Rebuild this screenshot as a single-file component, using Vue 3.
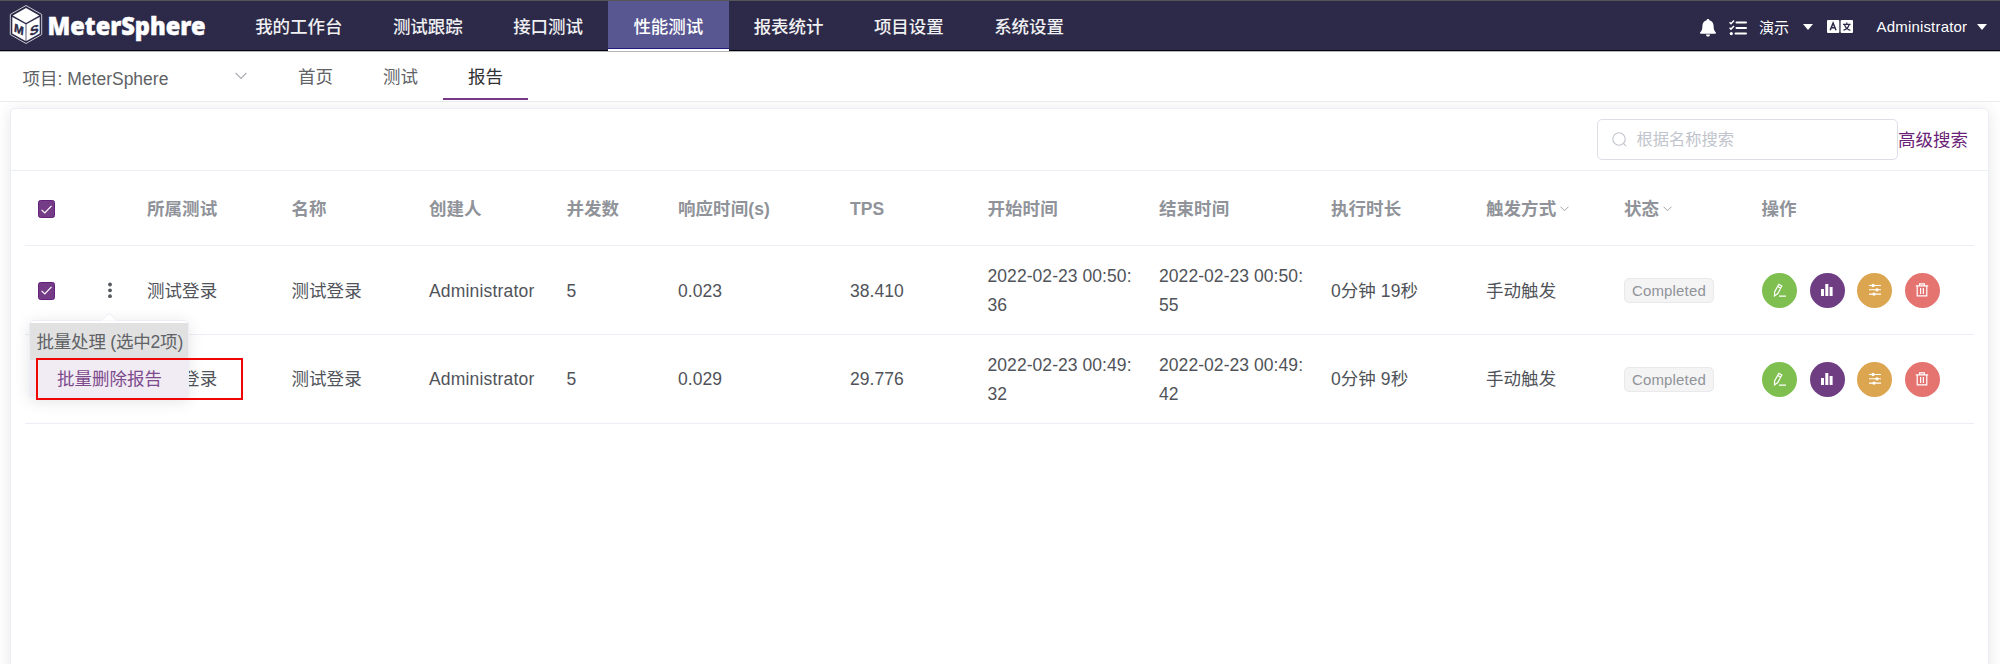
<script setup>
const menus = ['我的工作台', '测试跟踪', '接口测试', '性能测试', '报表统计', '项目设置', '系统设置']
const activeMenu = '性能测试'
const tabs = ['首页', '测试', '报告']
const activeTab = '报告'
const columns = [
  { label: '所属测试' }, { label: '名称' }, { label: '创建人' }, { label: '并发数' },
  { label: '响应时间(s)' }, { label: 'TPS' }, { label: '开始时间' }, { label: '结束时间' },
  { label: '执行时长' }, { label: '触发方式', filter: true }, { label: '状态', filter: true }, { label: '操作' },
]
const rows = [
  { test: '测试登录', name: '测试登录', user: 'Administrator', threads: '5', resp: '0.023', tps: '38.410', start: '2022-02-23 00:50:36', end: '2022-02-23 00:50:55', duration: '0分钟 19秒', trigger: '手动触发', status: 'Completed' },
  { test: '测试登录', name: '测试登录', user: 'Administrator', threads: '5', resp: '0.029', tps: '29.776', start: '2022-02-23 00:49:32', end: '2022-02-23 00:49:42', duration: '0分钟 9秒', trigger: '手动触发', status: 'Completed' },
]
const fields = ['test', 'name', 'user', 'threads', 'resp', 'tps', 'start', 'end', 'duration', 'trigger']
</script>

<template>
  <div class="page">
    <header class="topbar">
      <svg class="logo" width="206" height="46" viewBox="0 0 206 46">
        <path d="M22 1.500 37.700 10.400V30.600L22 39.500 6.300 30.600V10.400Z" fill="none" stroke="#c9c9d4" stroke-width="1" />
        <path d="M22 4 35.200 11.600 22 19 8.800 11.600Z" fill="#fff" />
        <path d="M8.300 12.900 21.600 20.200V37L8.300 29.500Z" fill="#fff" />
        <path d="M35.700 12.900 22.400 20.200V37L35.700 29.500Z" fill="#fff" />
        <text class="face" transform="matrix(1 .45 -.1 1 9.800 27.200)">M</text>
        <text class="face" transform="matrix(1.150 -.5 -.1 1.100 25.400 32.300)">S</text>
        <text x="43.500" y="31" class="brand" textLength="158" lengthAdjust="spacingAndGlyphs">MeterSphere</text>
      </svg>
      <nav class="menu">
        <a v-for="m in menus" :key="m" class="menu-item" :class="{ active: m === activeMenu }">{{ m }}</a>
      </nav>
      <div class="tools">
        <svg class="bell" width="16" height="18" viewBox="0 0 16 18"><path d="M8 0c.8 0 1.300.5 1.300 1.200C12 1.900 13.600 4 13.600 7c0 3.500.8 5 2.100 6.200.6.7.2 1.500-.7 1.500H1c-.9 0-1.300-.8-.7-1.500C1.600 12 2.400 10.500 2.400 7c0-3 1.600-5.100 4.300-5.800C6.700.5 7.200 0 8 0ZM5.900 15.600h4.200a2.100 2.100 0 0 1-4.200 0Z" fill="#fff" /></svg>
        <svg class="tasks" width="18" height="16" viewBox="0 0 18 16" fill="none" stroke="#fff"><path d="M.6 2.300 2 3.700 5 .6M.6 7.700 2 9.100 5 6" stroke-width="1.500" /><circle cx="2.300" cy="13.600" r="1.600" fill="#fff" stroke="none" /><path d="M7.500 2.500H17M7.500 8H17M6.500 13.600H17" stroke-width="2" stroke-linecap="round" /></svg>
        <span class="org">演示</span>
        <i class="caret caret-org"></i>
        <svg class="lang" width="26" height="13" viewBox="0 0 26 13"><rect width="12.300" height="13" rx="1" fill="#fff" /><rect x="13.600" width="12.400" height="13" rx="1" fill="#fff" /><path d="M3.200 10.300 6.100 3 9 10.300M4.300 7.800H8" fill="none" stroke="#2c2a48" stroke-width="1.500" /><path d="M16 4.300H23.600M19.800 2.500V4.300M22.200 4.500C21.600 7 19.500 9.300 16.400 10.300M17.500 4.500C18.300 7.400 20.300 9.500 23.400 10.300" fill="none" stroke="#2c2a48" stroke-width="1.200" /></svg>
        <span class="user">Administrator</span>
        <i class="caret"></i>
      </div>
    </header>

    <div class="subbar">
      <div class="project">
        <span>项目: MeterSphere</span>
        <svg width="12" height="8" viewBox="0 0 12 8"><path d="M.7 1 6 6.500 11.300 1" fill="none" stroke="#a9acb3" stroke-width="1.100" /></svg>
      </div>
      <a v-for="t in tabs" :key="t" class="tab" :class="{ active: t === activeTab }">{{ t }}</a>
    </div>

    <main class="content">
      <section class="card">
        <div class="card-head">
          <div class="search">
            <svg width="15" height="15" viewBox="0 0 15 15" fill="none" stroke="#c0c4cc" stroke-width="1.100"><circle cx="7" cy="7" r="6.200" /><path d="M11.400 11.400 14.200 14.200" /></svg>
            <span>根据名称搜索</span>
          </div>
          <a class="advanced">高级搜索</a>
        </div>
        <div class="table">
          <div class="row head">
            <div class="cell check"><span class="box"><svg width="17" height="17" viewBox="0 0 17 17"><path d="M3.600 8.800 6.800 12 13.500 4.800" fill="none" stroke="#fff" stroke-width="1.200" /></svg></span></div>
            <div class="cell"></div>
            <div v-for="c in columns" :key="c.label" class="cell">
              {{ c.label }}<svg v-if="c.filter" class="arrow" width="9" height="6" viewBox="0 0 9 6"><path d="M.5.700 4.500 4.700 8.500.700" fill="none" stroke="#a0a3a9" stroke-width="1" /></svg>
            </div>
          </div>
          <div v-for="(r, i) in rows" :key="i" class="row">
            <div class="cell check"><span class="box"><svg width="17" height="17" viewBox="0 0 17 17"><path d="M3.600 8.800 6.800 12 13.500 4.800" fill="none" stroke="#fff" stroke-width="1.200" /></svg></span></div>
            <div class="cell more"><svg width="4" height="17" viewBox="0 0 4 17" fill="#55585e"><circle cx="2" cy="2.500" r="1.900" /><circle cx="2" cy="8.300" r="1.900" /><circle cx="2" cy="14.200" r="1.900" /></svg></div>
            <div v-for="f in fields" :key="f" class="cell" :class="f"><span>{{ r[f] }}</span></div>
            <div class="cell status"><span class="tag">{{ r.status }}</span></div>
            <div class="cell actions">
              <button class="btn green"><svg width="14" height="14" viewBox="0 0 14 14" fill="none" stroke="#fff" stroke-width="1.200"><path d="M5.800 1.300 8.800 3 4.800 10.600 1.500 12.900 1.600 8.900ZM4.700 3.400 7.700 5.100M6 13.200H13" /></svg></button>
              <button class="btn purple"><svg width="14" height="14" viewBox="0 0 14 14" fill="#fff"><rect x="1" y="6" width="3" height="7" /><rect x="5.300" y="1" width="3" height="12" /><rect x="9.600" y="4" width="3" height="9" /></svg></button>
              <button class="btn orange"><svg width="14" height="14" viewBox="0 0 14 14" fill="#fff" stroke="#fff" stroke-width="1.100"><path d="M1 2.500H13M1 6.800H13M1 11.100H13" /><circle cx="5" cy="2.500" r="1.100" /><circle cx="9" cy="6.800" r="1.100" /><circle cx="6" cy="11.100" r="1.100" /></svg></button>
              <button class="btn red"><svg width="14" height="14" viewBox="0 0 14 14" fill="none" stroke="#fff" stroke-width="1.200"><path d="M.8 2.900H13.200M4.600 2.800V.900H9.400V2.800M2.200 3V12.900H11.800V3M5.600 5V11M8.400 5V11" /></svg></button>
            </div>
          </div>
        </div>
      </section>
    </main>

    <div class="dropdown">
      <svg class="tip" width="16" height="8" viewBox="0 0 16 8"><path d="M0 8 7 1Q8 .2 9 1L16 8Z" fill="#fff" stroke="#ebeef5" /></svg>
      <div class="drop-title">批量处理 (选中2项)</div>
      <div class="drop-item">批量删除报告</div>
    </div>
    <div class="highlight"></div>
  </div>
</template>

<style>
body { margin: 0; background: #fff; overflow: hidden; }
</style>

<style scoped>
* { box-sizing: border-box; }
.page { position: relative; width: 2000px; height: 664px; overflow: hidden; font-family: "Liberation Sans", "Noto Sans CJK SC", sans-serif; font-size: 17.5px; color: #606266; }
.topbar { display: flex; height: 52px; background: #2c2a48; border-top: 1px solid #565656; border-bottom: 1px solid #b5b5b8; box-shadow: inset 0 -1px 0 #05050d; }
.logo { flex: none; margin: 2.500px 0 0 4px; overflow: visible; }
.brand { font-family: "Noto Sans", "Open Sans", sans-serif; font-weight: 900; font-size: 25.500px; fill: #fff; stroke: #fff; stroke-width: .5px; }
.face { font-family: "Liberation Sans", sans-serif; font-weight: 700; font-size: 11.500px; fill: #2c2a48; stroke: #2c2a48; stroke-width: .4px; }
.menu { display: flex; margin-left: 20px; }
.menu-item { flex: none; height: 51px; padding: 0 25.130px; line-height: 52px; color: #f0f0f2; font-weight: 500; white-space: nowrap; }
.menu-item.active { height: 50px; background: #595791; border-bottom: 2px solid #fff; color: #fff; box-shadow: inset 0 -1px 0 #1e1c82; }
.tools { display: flex; align-items: center; height: 50px; margin-left: auto; padding-right: 13.500px; color: #fff; font-size: 15px; }
.tools > * { flex: none; }
.bell { margin: 3px 13px 0 0; }
.tasks { margin: 3px 12px 0 0; }
.org { width: 44px; }
.caret { border: 5px solid transparent; border-top: 6px solid #fff; border-bottom: 0; margin-left: 9px; margin-top: 1px; }
.caret-org { margin: 1px 14px 0 0; }
.lang { margin-right: 23.500px; }
.user { letter-spacing: .15px; width: 91px; }
.subbar { position: relative; z-index: 1; display: flex; height: 50px; background: #fff; border-bottom: 1px solid #e9ebef; }
.project { display: flex; align-items: center; justify-content: space-between; width: 247px; padding: 2px 0 0 22.500px; margin-right: 26px; }
.project svg { margin-bottom: 3px; }
.tab { width: 85px; height: 48px; line-height: 50px; text-align: center; }
.tab.active { color: #303133; border-bottom: 2px solid #783887; }
.content { padding: 6px 11px 0 10px; }
.card { height: 600px; background: #fff; border: 1px solid #ebeef5; border-radius: 5px; box-shadow: 0 2.500px 15px rgba(0, 0, 0, .1); }
.card-head { display: flex; align-items: center; justify-content: flex-end; height: 62px; padding: 0 20px 0 0; border-bottom: 1px solid #ebeef5; }
.search { display: flex; align-items: center; gap: 9.500px; width: 301px; height: 41px; margin-bottom: 1px; padding: 0 14px; border: 1px solid #dcdfe6; border-radius: 5px; color: #c0c4cc; font-size: 16.250px; line-height: 24px; }
.search span { margin-top: -1px; }
.advanced { color: #6a1f78; line-height: 28px; }
.table { margin: 0 14px; }
.row { display: grid; grid-template-columns: 59.500px 50px 144.500px 137.500px 137.500px 111.500px 172px 137.500px 171.500px 172px 155px 138px 137.500px 223.500px; height: 88.750px; border-bottom: 1px solid #ebeef5; align-items: center; color: #505359; line-height: 28.750px; }
.head { height: 75px; color: #909399; font-weight: 700; }
.cell { padding: 2px 12.500px 0; word-break: break-all; letter-spacing: .06px; }
.head .cell { white-space: nowrap; }
.user { letter-spacing: .18px; }
.row .user { width: auto; }
.check { line-height: 0; }
.box { display: inline-block; width: 17.500px; height: 17.500px; background: #743b86; border: 1px solid #65207a; border-radius: 2.500px; }
.box svg { margin: -.75px; }
.more { display: flex; justify-content: flex-end; padding-right: 23px; }
.arrow { margin-left: 4px; vertical-align: 3px; }
.status { padding-top: 0; }
.tag { display: inline-block; height: 25px; padding: 0 7px; line-height: 24.500px; border: 1px solid #e9e9eb; border-radius: 5px; background: #f4f4f5; color: #909399; font-size: 15px; letter-spacing: .15px; vertical-align: middle; }
.actions { display: flex; gap: 12.600px; padding-top: 1px; padding-left: 13px; }
.btn { display: flex; align-items: center; justify-content: center; flex: none; width: 35px; height: 35px; padding: 0; border: 0; border-radius: 50%; }
.green { background: #7fbf50; }
.purple { background: #6f3d82; }
.orange { background: #dca550; }
.red { background: #e57470; }
.dropdown { position: absolute; z-index: 3; left: 29px; top: 320px; width: 160px; height: 79px; padding-top: 2px; background: #fff; border: 1px solid #ebeef5; border-radius: 5px; box-shadow: 0 2.500px 15px rgba(0, 0, 0, .1); white-space: nowrap; }
.tip { position: absolute; left: 71px; top: -8px; }
.drop-title { height: 37px; padding-left: 6.500px; line-height: 38px; letter-spacing: -.2px; background: #e1e1e1; }
.drop-item { height: 38px; padding-left: 27px; line-height: 39px; background: #f1ebf3; color: #7d4a8d; }
.highlight { position: absolute; z-index: 4; left: 36px; top: 358px; width: 207px; height: 42px; border: 2px solid #f00505; }
</style>
